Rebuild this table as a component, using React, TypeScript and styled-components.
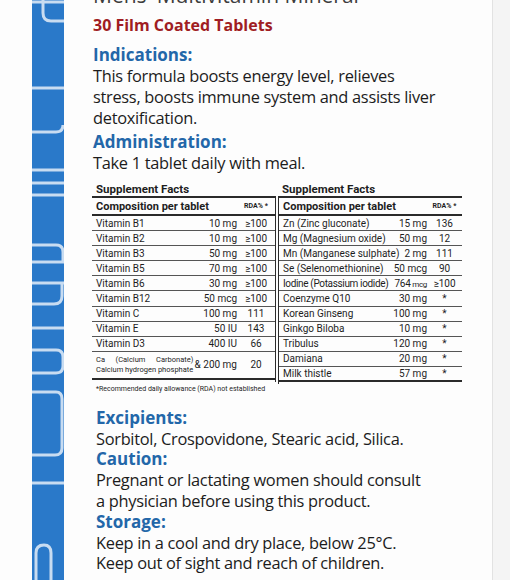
import styled, { createGlobalStyle } from "styled-components";

const GlobalStyle = createGlobalStyle`
  html, body {
    margin: 0;
    padding: 0;
    background: #f4f4f4;
  }
  body {
    font-family: "Open Sans", "Noto Sans", sans-serif;
  }
`;

// data
const leftRows = [
  { name: "Vitamin B1", amount: "10 mg", rda: "≥100" },
  { name: "Vitamin B2", amount: "10 mg", rda: "≥100" },
  { name: "Vitamin B3", amount: "50 mg", rda: "≥100" },
  { name: "Vitamin B5", amount: "70 mg", rda: "≥100" },
  { name: "Vitamin B6", amount: "30 mg", rda: "≥100" },
  { name: "Vitamin B12", amount: "50 mcg", rda: "≥100" },
  { name: "Vitamin C", amount: "100 mg", rda: "111" },
  { name: "Vitamin E", amount: "50 IU", rda: "143" },
  { name: "Vitamin D3", amount: "400 IU", rda: "66" },
];

const rightRows = [
  { name: "Zn (Zinc gluconate)", amount: "15 mg", rda: "136" },
  { name: "Mg (Magnesium oxide)", amount: "50 mg", rda: "12" },
  { name: "Mn (Manganese sulphate)", amount: "2 mg", rda: "111" },
  { name: "Se (Selenomethionine)", amount: "50 mcg", rda: "90" },
  { name: "Iodine (Potassium iodide)", amount: "764", unit: "mcg", rda: "≥100", tight: true },
  { name: "Coenzyme Q10", amount: "30 mg", rda: "*" },
  { name: "Korean Ginseng", amount: "100 mg", rda: "*" },
  { name: "Ginkgo Biloba", amount: "10 mg", rda: "*" },
  { name: "Tribulus", amount: "120 mg", rda: "*" },
  { name: "Damiana", amount: "20 mg", rda: "*" },
  { name: "Milk thistle", amount: "57 mg", rda: "*" },
];

// strip decoration, coordinates inside the 32px strip
const stripPaths = [
  "M0 2 H32",
  "M11 0 V13 Q11 21 19 21 H32",
  "M0 88 H32",
  "M0 132 H24 Q31 132 31 125",
  "M0 170 H32",
  "M0 183 H32",
  "M0 195 H32",
  "M0 245 H24 Q31 245 31 252 V262",
  "M0 262 H32",
  "M0 283 H32",
  "M30 283 V296 Q30 304 22 304 H0",
  "M0 328 H32",
  "M0 350 H24 Q31 350 31 357 V366 Q31 373 24 373 H0",
  "M0 392 H24 Q30 392 30 399 V448 Q30 455 23 455 H0",
  "M0 483 H32",
  "M4 580 V553 Q4 545 12 545 Q19 545 19 553 V580",
];

const StripArt = () => (
  <svg width="32" height="580" viewBox="0 0 32 580">
    {stripPaths.map((d) => (
      <path key={d} d={d} fill="none" stroke="#c8dcf1" strokeWidth="3" />
    ))}
  </svg>
);

export default function App() {
  return (
    <>
      <GlobalStyle />
      <Page>
        <Card>
          <Gutter />
          <Strip>
            <StripArt />
          </Strip>
          <Content>
            <Title>Mens' Multivitamin Mineral</Title>
            <Subtitle>30 Film Coated Tablets</Subtitle>

            <Heading $top={9}>Indications:</Heading>
            <Body>
              This formula boosts energy level, relieves
              <br />
              stress, boosts immune system and assists liver
              <br />
              detoxification.
            </Body>
            <Heading $top={3}>Administration:</Heading>
            <Body>Take 1 tablet daily with meal.</Body>

            <Facts>
              <FactsColumn>
                <Caption>Supplement Facts</Caption>
                <FactsTable $side="left">
                  <HeadRow $rda={38}>
                    <span>Composition per tablet</span>
                    <span />
                    <RdaHead>RDA% *</RdaHead>
                  </HeadRow>
                  {leftRows.map((r) => (
                    <Row key={r.name} $rda={38}>
                      <Name>{r.name}</Name>
                      <Amount>{r.amount}</Amount>
                      <Rda>{r.rda}</Rda>
                    </Row>
                  ))}
                  <Row $rda={38} $tall $last>
                    <NameStack>
                      <JustLine>Ca (Calcium Carbonate)</JustLine>
                      <span>Calcium hydrogen phosphate</span>
                    </NameStack>
                    <Amount>&amp; 200 mg</Amount>
                    <Rda>20</Rda>
                  </Row>
                </FactsTable>
                <Footnote>*Recommended daily allowance (RDA) not established</Footnote>
              </FactsColumn>

              <FactsColumn>
                <Caption>Supplement Facts</Caption>
                <FactsTable $side="right">
                  <HeadRow $rda={35}>
                    <span>Composition per tablet</span>
                    <span />
                    <RdaHead>RDA% *</RdaHead>
                  </HeadRow>
                  {rightRows.map((r, i) => (
                    <Row key={r.name} $rda={35} $last={i === rightRows.length - 1}>
                      <Name $tight={r.tight}>{r.name}</Name>
                      <Amount $tight={r.tight}>
                        {r.amount}
                        {r.unit && <SmallUnit> {r.unit}</SmallUnit>}
                      </Amount>
                      <Rda>{r.rda}</Rda>
                    </Row>
                  ))}
                </FactsTable>
              </FactsColumn>
            </Facts>

            <Lower>
              <Heading>Excipients:</Heading>
              <Body>Sorbitol, Crospovidone, Stearic acid, Silica.</Body>
              <Heading>Caution:</Heading>
              <Body>
                Pregnant or lactating women should consult
                <br />a physician before using this product.
              </Body>
              <Heading>Storage:</Heading>
              <Body>
                Keep in a cool and dry place, below 25°C.
                <br />
                Keep out of sight and reach of children.
              </Body>
            </Lower>
          </Content>
        </Card>
      </Page>
    </>
  );
}

const Page = styled.div`
  width: 510px;
  height: 580px;
  overflow: hidden;
  display: flex;
`;

const Card = styled.div`
  width: 492px;
  height: 580px;
  display: flex;
  background: #fdfdfd;
  border-right: 1px solid #e2e2e2;
`;

const Gutter = styled.div`
  width: 32px;
  flex: none;
`;

const Strip = styled.div`
  width: 32px;
  flex: none;
  background: #2a79c9;
  svg {
    display: block;
  }
`;

const Content = styled.main`
  flex: 1;
  min-width: 0;
  padding-left: 29px;
  display: flex;
  flex-direction: column;
  color: #1c1c1c;
`;

const Title = styled.h1`
  margin: -18px 0 0;
  font-size: 21px;
  line-height: 26px;
  font-weight: 400;
  color: #3d3d3d;
  white-space: nowrap;
`;

const Subtitle = styled.div`
  margin-top: 7px;
  font-size: 16px;
  line-height: 20px;
  font-weight: 700;
  color: #a01d23;
`;

const Heading = styled.h2<{ $top?: number }>`
  margin: ${(p) => p.$top ?? 0}px 0 0;
  font-size: 17px;
  line-height: 21px;
  font-weight: 700;
  color: #2367a9;
`;

const Body = styled.p`
  margin: 0;
  font-size: 16.4px;
  line-height: 21px;
  letter-spacing: -0.3px;
  white-space: nowrap;
  color: #1c1c1c;
`;

const Facts = styled.div`
  display: flex;
  gap: 2px;
  margin: 9px 0 0 -1px;
  font-family: Roboto, "Liberation Sans", sans-serif;
  color: #1e1e1e;
`;

const FactsColumn = styled.div`
  width: 184px;
  display: flex;
  flex-direction: column;
`;

const Caption = styled.div`
  padding-left: 4px;
  font-size: 11.5px;
  line-height: 14px;
  font-weight: 700;
`;

const FactsTable = styled.div<{ $side: "left" | "right" }>`
  border-top: 2px solid #2a2a2a;
  ${(p) => (p.$side === "left" ? "border-right" : "border-left")}: 1px solid #2a2a2a;
  padding-bottom: 2px;
`;

const Row = styled.div<{ $rda: number; $tall?: boolean; $last?: boolean }>`
  display: grid;
  grid-template-columns: 1fr auto ${(p) => p.$rda}px;
  align-items: center;
  box-sizing: border-box;
  height: ${(p) => (p.$tall ? 28 : 15.1)}px;
  padding-left: 4px;
  border-bottom: ${(p) => (p.$last ? "2px solid #2a2a2a" : "1px solid #555")};
  font-size: 10px;
`;

const HeadRow = styled(Row)`
  height: 18px;
  border-bottom: 2px solid #2a2a2a;
  font-weight: 700;
  font-size: 11px;
`;

const RdaHead = styled.span`
  font-size: 7px;
  text-align: center;
`;

const Name = styled.span<{ $tight?: boolean }>`
  white-space: nowrap;
  letter-spacing: ${(p) => (p.$tight ? "-0.35px" : "0")};
`;

const Amount = styled.span<{ $tight?: boolean }>`
  text-align: right;
  white-space: nowrap;
  letter-spacing: ${(p) => (p.$tight ? "-0.3px" : "0")};
`;

const SmallUnit = styled.span`
  font-size: 8px;
`;

const Rda = styled.span`
  text-align: center;
`;

const NameStack = styled.span`
  display: inline-flex;
  flex-direction: column;
  justify-self: start;
  font-size: 7.5px;
  line-height: 10px;
`;

const JustLine = styled.span`
  text-align: justify;
  text-align-last: justify;
`;

const Footnote = styled.div`
  margin-top: 3px;
  padding-left: 4px;
  font-size: 7px;
  line-height: 9px;
  white-space: nowrap;
`;

const Lower = styled.section`
  margin-top: 14px;
  padding-left: 3px;
  display: flex;
  flex-direction: column;
  & > * {
    line-height: 20.8px;
  }
`;
